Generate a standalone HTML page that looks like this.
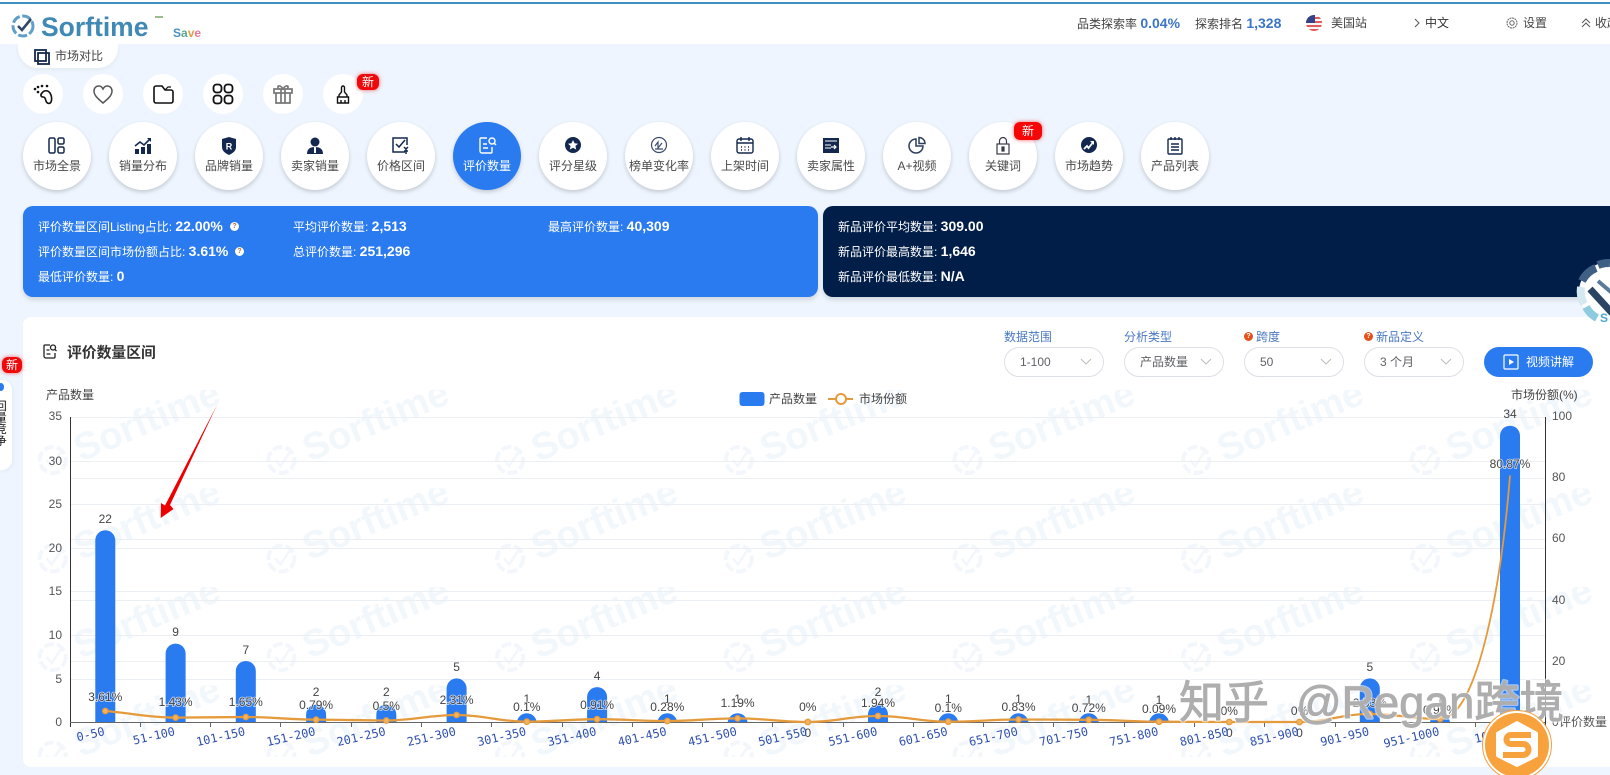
<!DOCTYPE html>
<html lang="zh"><head><meta charset="utf-8"><title>Sorftime</title>
<style>
html,body{margin:0;padding:0}
body{width:1610px;height:775px;overflow:hidden;position:relative;background:#eef5fe;font-family:"Liberation Sans","Noto Sans CJK SC",sans-serif;font-size:12px;color:#333}
.a{position:absolute;white-space:nowrap}
.hd{left:0;top:0;width:1610px;height:44px;background:#fff}
.bar{left:0;top:2px;width:1610px;height:2px;background:#3f8fbf}
.t{line-height:16px;color:#444}
.t b{color:#3b76c4;font-size:14px;font-weight:bold}
.s{width:40px;height:40px;border-radius:50%;background:#fff;top:74px}
.s svg{position:absolute;left:8px;top:8px}
.c{width:68px;height:68px;border-radius:50%;background:#fff;top:122px;box-shadow:0 2px 4px rgba(0,0,0,.18);text-align:center;color:#4a4a4a}
.c svg{position:absolute;left:23px;top:13px}
.c span{position:absolute;left:-6px;right:-6px;top:36px;line-height:16px;white-space:nowrap}
.c.on{background:#2a7af0;color:#fff}
.nw{background:#ee0a0a;color:#fff;border-radius:6px;text-align:center;box-shadow:0 0 4px rgba(240,0,0,.6);line-height:16px}
.card{top:206px;height:91px;border-radius:10px;box-shadow:0 3px 5px rgba(0,0,0,.12);color:#fff}
.r{line-height:16px;color:#fff}
.r b{font-size:14px;font-weight:bold}
.q{width:9px;height:9px;border-radius:50%;background:#fff;color:#c0703c;font-size:7px;line-height:9px;text-align:center;font-weight:bold}
.sel{top:347px;width:98px;height:28px;border:1px solid #dcdfe6;border-radius:15px;background:#fff;color:#606266;line-height:28px;text-indent:15px}
.sel svg{position:absolute;left:75px;top:9px}
.lb{top:329px;color:#4a78c0;line-height:16px}
.oq{top:332px;width:9px;height:9px;border-radius:50%;background:#e4511a;color:#fff;font-size:7px;line-height:9px;text-align:center;font-weight:bold}
svg text{font-family:"Liberation Sans","Noto Sans CJK SC",sans-serif}
.ct{font-size:12px;fill:#444;text-anchor:middle}
.p{font-size:12px;fill:#444;text-anchor:middle;paint-order:stroke;stroke:#fff;stroke-width:1.6px;stroke-opacity:.75}
.x{font-family:"DejaVu Sans Mono","Liberation Mono",monospace!important;font-size:11.8px;fill:#2f4fae;text-anchor:end}
.yl{font-size:12px;fill:#555;text-anchor:end}
.yr{font-size:12px;fill:#555}
</style></head><body>

<div class="a hd"></div><div class="a bar"></div>
<!-- logo -->
<svg class="a" style="left:10px;top:12px" width="30" height="28" viewBox="0 0 30 28"><circle cx="13" cy="14" r="10" fill="none" stroke="#5f9fc8" stroke-width="3" stroke-dasharray="9 2.5"/><path d="M8 14l4 4 9-11" fill="none" stroke="#2f4a68" stroke-width="2.6"/></svg>
<div class="a" style="left:41px;top:11px;font:bold 26.500px/32px 'Liberation Sans',sans-serif;color:#4189b5">Sorftime</div>
<div class="a" style="left:155px;top:16px;width:8px;height:2px;background:#9dbb8f"></div>
<div class="a" style="left:173px;top:26px;font:bold 12px/14px 'Liberation Sans',sans-serif;letter-spacing:0"><span style="color:#4a90c0">S</span><span style="color:#5aa890">a</span><span style="color:#dca04a">v</span><span style="color:#e47a96">e</span></div>

<!-- header right -->
<div class="a t" style="left:1077px;top:15px">品类探索率 <b>0.04%</b></div>
<div class="a t" style="left:1195px;top:15px">探索排名 <b>1,328</b></div>
<svg class="a" style="left:1306px;top:15px" width="16" height="16" viewBox="0 0 16 16"><defs><clipPath id="fl"><circle cx="8" cy="8" r="8"/></clipPath></defs><g clip-path="url(#fl)"><rect width="16" height="16" fill="#f6f6f6"/><rect y="2" width="16" height="2" fill="#e25a5a"/><rect y="6" width="16" height="2" fill="#e25a5a"/><rect y="10" width="16" height="2" fill="#e25a5a"/><rect y="14" width="16" height="2" fill="#e25a5a"/><rect width="9" height="8" fill="#33408a"/></g></svg>
<div class="a t" style="left:1331px;top:15px">美国站</div>
<svg class="a" style="left:1414px;top:18px" width="6" height="10"><path d="M1 1l4 4-4 4" fill="none" stroke="#555"/></svg>
<div class="a t" style="left:1425px;top:15px;color:#333">中文</div>
<svg class="a" style="left:1506px;top:17px" width="12" height="12" viewBox="0 0 12 12"><circle cx="6" cy="6" r="5" fill="none" stroke="#666" stroke-dasharray="2 .6"/><circle cx="6" cy="6" r="2.2" fill="none" stroke="#666"/></svg>
<div class="a t" style="left:1523px;top:15px">设置</div>
<svg class="a" style="left:1581px;top:18px" width="10" height="10"><path d="M1 5l4-4 4 4M1 9l4-4 4 4" fill="none" stroke="#555"/></svg>
<div class="a t" style="left:1595px;top:15px">收起</div>

<!-- compare pill -->
<div class="a" style="left:18px;top:44px;width:100px;height:24px;background:#fff;border-radius:0 0 20px 20px;box-shadow:0 2px 4px rgba(0,0,0,.05)"></div>
<svg class="a" style="left:34px;top:49px" width="16" height="16"><rect x="1" y="1" width="11" height="11" fill="none" stroke="#14284f" stroke-width="1.8"/><rect x="4" y="4" width="11" height="11" fill="none" stroke="#14284f" stroke-width="1.8"/></svg>
<div class="a" style="left:55px;top:48px;line-height:16px;color:#444">市场对比</div>

<!-- small circles -->
<div class="a s" style="left:23px"><svg width="24" height="24" viewBox="0 0 24 24"><path d="M11 11c2-3 6-3 8 0s2 7 1 9-4 2-5-1-1-4-3-4-3-2-1-4z" fill="none" stroke="#111" stroke-width="1.6"/><circle cx="4" cy="7" r="1.3" fill="#111"/><circle cx="7" cy="10" r="1.3" fill="#111"/><circle cx="7" cy="5" r="1.3" fill="#111"/><circle cx="11" cy="4" r="1.3" fill="#111"/><circle cx="16" cy="4" r="1.3" fill="#111"/></svg></div>
<div class="a s" style="left:83px"><svg width="24" height="24" viewBox="0 0 24 24"><path d="M12 21C6 16 3 13 3 9c0-3 2-5 5-5 2 0 3 1 4 3 1-2 2-3 4-3 3 0 5 2 5 5 0 4-3 7-9 12z" fill="none" stroke="#555" stroke-width="1.5"/></svg></div>
<div class="a s" style="left:143px"><svg width="24" height="24" viewBox="0 0 24 24"><path d="M3 6a2 2 0 0 1 2-2h6l3 4h6a2 2 0 0 1 2 2v9a2 2 0 0 1-2 2H5a2 2 0 0 1-2-2z" fill="none" stroke="#111" stroke-width="1.600"/><path d="M14 8l3-3h3" fill="none" stroke="#111" stroke-width="1.200"/></svg></div>
<div class="a s" style="left:203px"><svg width="24" height="24" viewBox="0 0 24 24" fill="none" stroke="#111" stroke-width="1.8"><rect x="2.500" y="2.500" width="8" height="8" rx="3"/><rect x="13.500" y="2.500" width="8" height="8" rx="3"/><rect x="2.500" y="13.500" width="8" height="8" rx="3"/><rect x="13.500" y="13.500" width="8" height="8" rx="3"/></svg></div>
<div class="a s" style="left:263px"><svg width="24" height="24" viewBox="0 0 24 24" fill="none" stroke="#777" stroke-width="1.7"><rect x="3" y="7" width="18" height="4"/><path d="M5 11v10h14V11M10 7v14M14 7v14M8 7c-3-3 1-5 4 0 3-5 7-3 4 0"/></svg></div>
<div class="a s" style="left:323px"><svg width="24" height="24" viewBox="0 0 24 24" fill="none" stroke="#111" stroke-width="1.400"><path d="M10.500 10V5.500a1.500 1.500 0 0 1 3 0V10l2.500 3v2H8v-2zM6.500 15h11v6h-11zM10 18v3M14 18v3"/></svg></div>
<div class="a nw" style="left:357px;top:74px;width:22px;height:16px">新</div>

<!-- big circles -->
<div class="a c" style="left:23px"><svg width="22" height="22" viewBox="0 0 22 22" fill="none" stroke="#14284f" stroke-width="1.5"><rect x="3" y="3" width="6" height="15" rx="1.5"/><rect x="12" y="3" width="6" height="6" rx="1.5"/><rect x="12" y="12" width="6" height="6" rx="1.5"/></svg><span>市场全景</span></div>
<div class="a c" style="left:109px"><svg width="22" height="22" viewBox="0 0 22 22"><path d="M3 11l5-4 4 3 6-6" fill="none" stroke="#14284f" stroke-width="1.6"/><path d="M15 3h4v4z" fill="#14284f"/><rect x="3" y="14" width="4" height="5" fill="#14284f"/><rect x="9" y="12" width="4" height="7" fill="#14284f"/><rect x="15" y="9" width="4" height="10" fill="#14284f"/></svg><span>销量分布</span></div>
<div class="a c" style="left:195px"><svg width="22" height="22" viewBox="0 0 22 22"><path d="M11 2l7 2v8c0 4-3 6-7 8-4-2-7-4-7-8V4z" fill="#14284f"/><text x="11" y="14.500" font-size="9" font-weight="bold" fill="#fff" text-anchor="middle">R</text></svg><span>品牌销量</span></div>
<div class="a c" style="left:281px"><svg width="22" height="22" viewBox="0 0 22 22"><circle cx="11" cy="7" r="4.500" fill="#14284f"/><path d="M3 19c0-5 3-7 8-7s8 2 8 7z" fill="#14284f"/><rect x="10" y="12" width="2" height="6" fill="#fff"/></svg><span>卖家销量</span></div>
<div class="a c" style="left:367px"><svg width="22" height="22" viewBox="0 0 22 22" fill="none" stroke="#14284f" stroke-width="1.5"><path d="M15 17H3V3h14v7"/><path d="M6 9l3 3 6-7"/><path d="M14 12l2 2 2-2M16 14v5M14 16h4"/></svg><span>价格区间</span></div>
<div class="a c on" style="left:453px"><svg width="22" height="22" viewBox="0 0 22 22" fill="none" stroke="#fff" stroke-width="1.4"><path d="M11 3H5a1 1 0 0 0-1 1v12a2 2 0 0 0 2 2h9a1 1 0 0 0 1-1v-5"/><path d="M7 9h4M7 13h5"/><circle cx="16" cy="6" r="3"/><path d="M18 8l2 2"/></svg><span>评价数量</span></div>
<div class="a c" style="left:539px"><svg width="22" height="22" viewBox="0 0 22 22"><circle cx="11" cy="10" r="8" fill="#14284f"/><path d="M11 5l1.500 3.300 3.500.4-2.600 2.300.8 3.500-3.200-1.800-3.200 1.800.8-3.500L6 8.700l3.500-.4z" fill="#fff"/></svg><span>评分星级</span></div>
<div class="a c" style="left:625px"><svg width="22" height="22" viewBox="0 0 22 22" fill="none" stroke="#3c4c6c" stroke-width="1.2"><circle cx="11" cy="10" r="7.500"/><path d="M7 11l3-4v6l4-5M7 14h8"/></svg><span style="left:-8px;right:-8px">榜单变化率</span></div>
<div class="a c" style="left:711px"><svg width="22" height="22" viewBox="0 0 22 22" fill="none" stroke="#14284f" stroke-width="1.4"><rect x="3" y="4" width="16" height="14" rx="2"/><path d="M3 8h16M7 2v4M15 2v4M7 12h1M10.500 12h1M14 12h1M7 15h1M10.500 15h1M14 15h1"/></svg><span>上架时间</span></div>
<div class="a c" style="left:797px"><svg width="22" height="22" viewBox="0 0 22 22"><rect x="3" y="3" width="16" height="15" fill="#14284f"/><path d="M5 6h12M5 10h6M5 13h6" stroke="#fff" stroke-width="1"/><path d="M11 12h5M14 10l2 2-2 2" stroke="#fff" stroke-width="1.200" fill="none"/></svg><span>卖家属性</span></div>
<div class="a c" style="left:883px"><svg width="22" height="22" viewBox="0 0 22 22" fill="none" stroke="#2e3e5e" stroke-width="1.5"><path d="M10 4a7 7 0 1 0 7 7h-7z"/><path d="M13 2.500a6 6 0 0 1 6 6h-6z"/></svg><span>A+视频</span></div>
<div class="a c" style="left:969px"><svg width="22" height="22" viewBox="0 0 22 22" fill="none" stroke="#3a3a4a" stroke-width="1.2"><rect x="5" y="9" width="12" height="10"/><path d="M7.500 9V6a3.500 3.500 0 0 1 7 0v3"/><rect x="10" y="12" width="2" height="4" fill="#3a3a4a"/></svg><span>关键词</span></div>
<div class="a c" style="left:1055px"><svg width="22" height="22" viewBox="0 0 22 22"><circle cx="11" cy="10" r="8" fill="#14284f"/><path d="M6 14l3-3 1.500 2 4-5" fill="none" stroke="#fff" stroke-width="1.800"/><path d="M12 6h4v4z" fill="#fff"/></svg><span>市场趋势</span></div>
<div class="a c" style="left:1141px"><svg width="22" height="22" viewBox="0 0 22 22" fill="none" stroke="#14284f" stroke-width="1.4"><rect x="4" y="4" width="14" height="15" rx="1"/><path d="M7 2v3M11 2v3M15 2v3M7 9h8M7 12h8M7 15h8"/></svg><span>产品列表</span></div>
<div class="a nw" style="left:1014px;top:122px;width:28px;height:18px;line-height:18px;background:#f60606">新</div>

<!-- info cards -->
<div class="a card" style="left:23px;width:795px;background:#2a7af0"></div>
<div class="a card" style="left:823px;width:800px;background:#011e48"></div>
<div class="a r" style="left:38px;top:218px">评价数量区间Listing占比: <b>22.00%</b></div>
<div class="a q" style="left:230px;top:222px">?</div>
<div class="a r" style="left:38px;top:243px">评价数量区间市场份额占比: <b>3.61%</b></div>
<div class="a q" style="left:235px;top:247px">?</div>
<div class="a r" style="left:38px;top:268px">最低评价数量: <b>0</b></div>
<div class="a r" style="left:293px;top:218px">平均评价数量: <b>2,513</b></div>
<div class="a r" style="left:293px;top:243px">总评价数量: <b>251,296</b></div>
<div class="a r" style="left:548px;top:218px">最高评价数量: <b>40,309</b></div>
<div class="a r" style="left:838px;top:218px">新品评价平均数量: <b>309.00</b></div>
<div class="a r" style="left:838px;top:243px">新品评价最高数量: <b>1,646</b></div>
<div class="a r" style="left:838px;top:268px">新品评价最低数量: <b>N/A</b></div>

<!-- chart card -->
<div class="a" style="left:23px;top:317px;width:1600px;height:450px;background:#fff;border-radius:8px"></div>

<svg class="a" style="left:0;top:0" width="1610" height="775" viewBox="0 0 1610 775">
<defs>
<clipPath id="wm"><rect x="23" y="385" width="1587" height="372"/></clipPath>
<clipPath id="pl"><rect x="60" y="400" width="1500" height="322"/></clipPath>
<pattern id="wt" x="37.7" y="390" width="228.7" height="98.5" patternUnits="userSpaceOnUse">
<text transform="translate(43 72) rotate(-22.700)" font-size="38" font-weight="bold" fill="#f2f7fc" style="font-family:'Liberation Sans',sans-serif">Sorftime</text>
</pattern>
<pattern id="wi" x="37.7" y="440" width="228.7" height="98.5" patternUnits="userSpaceOnUse">
<circle cx="15" cy="20" r="13" fill="none" stroke="#f3f7fc" stroke-width="4" stroke-dasharray="10 3"/>
<path d="M9 20l5 6 10-15" fill="none" stroke="#f3f7fc" stroke-width="2.500"/>
</pattern>
</defs>
<g clip-path="url(#wm)">
<rect x="23" y="385" width="1587" height="372" fill="url(#wt)"/>
<rect x="23" y="385" width="1587" height="372" fill="url(#wi)"/>
</g>

<!-- grid -->
<g stroke="#ebeff3" stroke-width="1">
<path d="M70 417.500H1545M70 461.500H1545M70 478.500H1545M70 504.500H1545M70 539.500H1545M70 548.500H1545M70 591.500H1545M70 600.500H1545M70 635.500H1545M70 661.500H1545M70 679.500H1545"/>
</g>

<!-- bars -->
<g clip-path="url(#pl)" fill="#2a7af0">
<rect x="95.300" y="530.300" width="20" height="210" rx="10"/>
<rect x="165.600" y="643.600" width="20" height="100" rx="10"/>
<rect x="235.800" y="661" width="20" height="80" rx="10"/>
<rect x="306.100" y="704.600" width="20" height="40" rx="10"/>
<rect x="376.300" y="704.600" width="20" height="40" rx="10"/>
<rect x="446.600" y="678.400" width="20" height="60" rx="10"/>
<rect x="516.800" y="713.300" width="20" height="30" rx="10"/>
<rect x="587.100" y="687.100" width="20" height="50" rx="10"/>
<rect x="657.300" y="713.300" width="20" height="30" rx="10"/>
<rect x="727.600" y="713.300" width="20" height="30" rx="10"/>
<rect x="868" y="704.600" width="20" height="40" rx="10"/>
<rect x="938.300" y="713.300" width="20" height="30" rx="10"/>
<rect x="1008.500" y="713.300" width="20" height="30" rx="10"/>
<rect x="1078.800" y="713.300" width="20" height="30" rx="10"/>
<rect x="1149" y="713.300" width="20" height="30" rx="10"/>
<rect x="1359.800" y="678.400" width="20" height="60" rx="10"/>
<rect x="1430" y="713.300" width="20" height="30" rx="10"/>
<rect x="1500" y="425.700" width="20" height="320" rx="10"/>
</g>

<!-- axes -->
<path d="M70.500 417V727" stroke="#333" fill="none"/>
<path d="M1545.500 417V727" stroke="#333" fill="none"/>
<path d="M70 722.500H1545M140.500 722V727M210.500 722V727M280.500 722V727M351.500 722V727M421.500 722V727M491.500 722V727M562.500 722V727M632.500 722V727M702.500 722V727M772.500 722V727M843.500 722V727M913.500 722V727M983.500 722V727M1053.500 722V727M1124.500 722V727M1194.500 722V727M1264.500 722V727M1335.500 722V727M1405.500 722V727M1475.500 722V727" stroke="#666" fill="none"/>

<!-- y labels -->
<g class="yl">
<text class="yl" x="62" y="420">35</text><text class="yl" x="62" y="465">30</text><text class="yl" x="62" y="508">25</text><text class="yl" x="62" y="552">20</text><text class="yl" x="62" y="595">15</text><text class="yl" x="62" y="639">10</text><text class="yl" x="62" y="683">5</text><text class="yl" x="62" y="726">0</text>
</g>
<text class="yr" x="1552" y="420">100</text><text class="yr" x="1552" y="481">80</text><text class="yr" x="1552" y="542">60</text><text class="yr" x="1552" y="604">40</text><text class="yr" x="1552" y="665">20</text><text class="yr" x="1552" y="726">0</text>
<text class="yr" x="1559" y="726">评价数量</text>
<text x="46" y="399" font-size="12" fill="#444">产品数量</text>
<text x="1511" y="399" font-size="12" fill="#444">市场份额(%)</text>

<!-- legend -->
<rect x="739.500" y="392" width="25" height="14" rx="3" fill="#2a7af0"/>
<text x="769" y="403" font-size="12" fill="#444">产品数量</text>
<path d="M828 399H853" stroke="#e59a3c" stroke-width="2"/>
<circle cx="841" cy="399" r="5" fill="#fff" stroke="#e59a3c" stroke-width="2"/>
<text x="859" y="403" font-size="12" fill="#444">市场份额</text>

<!-- line -->
<path d="M105.300 711C130 713 150 717.600 175.600 717.600S220 717 245.800 717S290 719.600 316.100 719.600S360 720.500 386.300 720.500S430 715 456.600 715S500 721.700 526.800 721.700S570 719.200 597.100 719.200S640 721 667.300 721S710 718.400 737.600 718.400S780 722 807.800 722S850 716 878 716S920 721.700 948.300 721.700S990 719.500 1018.500 719.500S1060 719.800 1088.800 719.800S1130 721.700 1159 721.700S1200 722 1229.300 722S1270 722 1299.500 722S1340 714 1369.800 714S1410 719 1440 719" fill="none" stroke="#e59a3c" stroke-width="2.300"/>
<path d="M1440 719C1475 719 1500 600 1510 475.400" fill="none" stroke="#e59a3c" stroke-width="1.800"/>
<g fill="#f3b25e" stroke="#e59a3c" stroke-width="1.200">
<circle cx="105.300" cy="711" r="2.800"/><circle cx="175.600" cy="717.600" r="2.800"/><circle cx="245.800" cy="717" r="2.800"/><circle cx="316.100" cy="719.600" r="2.800"/><circle cx="386.300" cy="720.500" r="2.800"/><circle cx="456.600" cy="715" r="2.800"/><circle cx="526.800" cy="721.700" r="2.800"/><circle cx="597.100" cy="719.200" r="2.800"/><circle cx="667.300" cy="721" r="2.800"/><circle cx="737.600" cy="718.400" r="2.800"/><circle cx="807.800" cy="722" r="2.800"/><circle cx="878" cy="716" r="2.800"/><circle cx="948.300" cy="721.700" r="2.800"/><circle cx="1018.500" cy="719.500" r="2.800"/><circle cx="1088.800" cy="719.800" r="2.800"/><circle cx="1159" cy="721.700" r="2.800"/><circle cx="1229.300" cy="722" r="2.800"/><circle cx="1299.500" cy="722" r="2.800"/><circle cx="1369.800" cy="714" r="2.800"/><circle cx="1440" cy="719" r="2.800"/>
</g>

<!-- count labels -->
<text class="ct" x="105.300" y="523">22</text><text class="ct" x="175.600" y="636">9</text><text class="ct" x="245.800" y="654">7</text><text class="ct" x="316.100" y="696">2</text><text class="ct" x="386.300" y="696">2</text><text class="ct" x="456.600" y="671">5</text><text class="ct" x="526.800" y="703">1</text><text class="ct" x="597.100" y="680">4</text><text class="ct" x="667.300" y="703">1</text><text class="ct" x="737.600" y="703">1</text><text class="ct" x="807.800" y="737">0</text><text class="ct" x="878" y="696">2</text><text class="ct" x="948.300" y="703">1</text><text class="ct" x="1018.500" y="703">1</text><text class="ct" x="1088.800" y="704">1</text><text class="ct" x="1159" y="704">1</text><text class="ct" x="1229.300" y="737">0</text><text class="ct" x="1299.500" y="737">0</text><text class="ct" x="1369.800" y="671">5</text><text class="ct" x="1440" y="704">1</text><text class="ct" x="1510" y="418">34</text>

<!-- pct labels -->
<text class="p" x="105.300" y="701">3.61%</text><text class="p" x="175.600" y="706">1.43%</text><text class="p" x="245.800" y="706">1.65%</text><text class="p" x="316.100" y="709">0.79%</text><text class="p" x="386.300" y="710">0.5%</text><text class="p" x="456.600" y="704">2.31%</text><text class="p" x="526.800" y="711">0.1%</text><text class="p" x="597.100" y="709">0.91%</text><text class="p" x="667.300" y="711">0.28%</text><text class="p" x="737.600" y="707">1.19%</text><text class="p" x="807.800" y="711">0%</text><text class="p" x="878" y="707">1.94%</text><text class="p" x="948.300" y="712">0.1%</text><text class="p" x="1018.500" y="711">0.83%</text><text class="p" x="1088.800" y="712">0.72%</text><text class="p" x="1159" y="713">0.09%</text><text class="p" x="1229.300" y="715">0%</text><text class="p" x="1299.500" y="715">0%</text><text class="p" x="1369.800" y="707">2.53%</text><text class="p" x="1440" y="714">0.99%</text><text class="p" x="1510" y="468">80.87%</text>

<!-- x labels -->
<text class="x" transform="rotate(-13 105.300 735)" x="105.300" y="735">0-50</text>
<text class="x" transform="rotate(-13 175.600 735)" x="175.600" y="735">51-100</text>
<text class="x" transform="rotate(-13 245.800 735)" x="245.800" y="735">101-150</text>
<text class="x" transform="rotate(-13 316.100 735)" x="316.100" y="735">151-200</text>
<text class="x" transform="rotate(-13 386.300 735)" x="386.300" y="735">201-250</text>
<text class="x" transform="rotate(-13 456.600 735)" x="456.600" y="735">251-300</text>
<text class="x" transform="rotate(-13 526.800 735)" x="526.800" y="735">301-350</text>
<text class="x" transform="rotate(-13 597.100 735)" x="597.100" y="735">351-400</text>
<text class="x" transform="rotate(-13 667.300 735)" x="667.300" y="735">401-450</text>
<text class="x" transform="rotate(-13 737.600 735)" x="737.600" y="735">451-500</text>
<text class="x" transform="rotate(-13 807.800 735)" x="807.800" y="735">501-550</text>
<text class="x" transform="rotate(-13 878 735)" x="878" y="735">551-600</text>
<text class="x" transform="rotate(-13 948.300 735)" x="948.300" y="735">601-650</text>
<text class="x" transform="rotate(-13 1018.500 735)" x="1018.500" y="735">651-700</text>
<text class="x" transform="rotate(-13 1088.800 735)" x="1088.800" y="735">701-750</text>
<text class="x" transform="rotate(-13 1159 735)" x="1159" y="735">751-800</text>
<text class="x" transform="rotate(-13 1229.300 735)" x="1229.300" y="735">801-850</text>
<text class="x" transform="rotate(-13 1299.500 735)" x="1299.500" y="735">851-900</text>
<text class="x" transform="rotate(-13 1369.800 735)" x="1369.800" y="735">901-950</text>
<text class="x" transform="rotate(-13 1440 735)" x="1440" y="735">951-1000</text>
<text class="x" transform="rotate(-13 1510 735)" x="1510" y="735">1001+</text>

<!-- red arrow -->
<path d="M217 405L170 505L173.500 509L160.700 518L161 503L165 505.500Z" fill="#ee0000"/>

<!-- title icon -->
<g fill="none" stroke="#222" stroke-width="1.300"><path d="M50 345h-5a1 1 0 0 0-1 1v10a2 2 0 0 0 2 2h8a1 1 0 0 0 1-1v-4"/><path d="M46.500 350h3M46.500 354h4"/><circle cx="53" cy="347.500" r="2.500"/><path d="M55 349.500l1.500 1.500"/></g>
<text x="67" y="357.500" font-size="14.800" font-weight="bold" fill="#333">评价数量区间</text>

<!-- zhihu watermark -->
<g font-size="45" stroke-linejoin="round">
<text x="1179" y="718" fill="none" stroke="#fff" stroke-opacity=".55" stroke-width="3.500">知乎</text>
<text x="1296" y="718" fill="none" stroke="#fff" stroke-opacity=".55" stroke-width="3.500">@Regan跨境</text>
<text x="1179" y="718" fill="#aeaeae" stroke="#aeaeae" stroke-width=".9">知乎</text>
<text x="1296" y="718" fill="#aeaeae" stroke="#aeaeae" stroke-width=".9">@Regan跨境</text>
</g>

<!-- S logo -->
<circle cx="1517" cy="745" r="34.500" fill="#fff" stroke="#f4a040" stroke-width="1"/>
<circle cx="1517" cy="745" r="32" fill="#f8a23e"/>
<path d="M1517 722l20 11v23l-20 10-20-10v-23z" fill="#fff" stroke="#fff" stroke-width="2" stroke-linejoin="round"/>
<path d="M1531 735h-20a4.500 4.500 0 0 0 0 9h12a5 5 0 0 1 0 11h-20" fill="none" stroke="#f8a23e" stroke-width="6"/>

<!-- right floating logo -->
<circle cx="1609" cy="292" r="30" fill="#fff"/>
<g fill="none" stroke-width="8">
<path d="M1582 281a27 27 0 0 1 14-13" stroke="#3f5f85"/>
<path d="M1598 265a27 27 0 0 1 12-2" stroke="#3f5f85"/>
<path d="M1581 287a27 27 0 0 0 3 17" stroke="#d5e9f0"/>
<path d="M1586 307a27 27 0 0 0 11 11" stroke="#8ecbe0"/>
</g>
<path d="M1590 289L1612 313" fill="none" stroke="#2b4464" stroke-width="7"/>
<path d="M1598 281L1612 293" fill="none" stroke="#5a7a9a" stroke-width="4"/>
<text x="1600" y="322" font-size="12" font-weight="bold" fill="#4aa8c8">S</text>
</svg>

<!-- controls -->
<div class="a lb" style="left:1004px">数据范围</div>
<div class="a lb" style="left:1124px">分析类型</div>
<div class="a oq" style="left:1244px">?</div><div class="a lb" style="left:1256px">跨度</div>
<div class="a oq" style="left:1364px">?</div><div class="a lb" style="left:1376px">新品定义</div>
<div class="a sel" style="left:1004px">1-100<svg width="12" height="10"><path d="M1 2l5 5 5-5" fill="none" stroke="#bbb"/></svg></div>
<div class="a sel" style="left:1124px">产品数量<svg width="12" height="10"><path d="M1 2l5 5 5-5" fill="none" stroke="#bbb"/></svg></div>
<div class="a sel" style="left:1244px">50<svg width="12" height="10"><path d="M1 2l5 5 5-5" fill="none" stroke="#bbb"/></svg></div>
<div class="a sel" style="left:1364px">3 个月<svg width="12" height="10"><path d="M1 2l5 5 5-5" fill="none" stroke="#bbb"/></svg></div>
<div class="a" style="left:1484px;top:347px;width:109px;height:30px;border-radius:15px;background:#2a7af0;color:#fff;line-height:30px;text-indent:42px">视频讲解</div>
<svg class="a" style="left:1503px;top:354px" width="16" height="16"><rect x="1" y="1" width="14" height="14" rx="1" fill="none" stroke="#fff" stroke-width="1.200"/><path d="M6 5l5 3-5 3z" fill="#fff"/></svg>

<!-- left side widget -->
<div class="a" style="left:0;top:380px;width:12px;height:90px;background:#fff;border-radius:0 10px 10px 0;overflow:hidden;box-shadow:1px 1px 4px rgba(0,0,0,.05)">
<div class="a" style="left:-2px;top:3px;width:6px;height:8px;border-radius:50%;background:#2a7af0"></div>
<div class="a" style="left:-6px;top:20px;writing-mode:vertical-rl;font-size:11.500px;line-height:11px;color:#111">回量竞争</div>
</div>
<div class="a nw" style="left:2px;top:357px;width:20px;height:16px">新</div>

</body></html>
